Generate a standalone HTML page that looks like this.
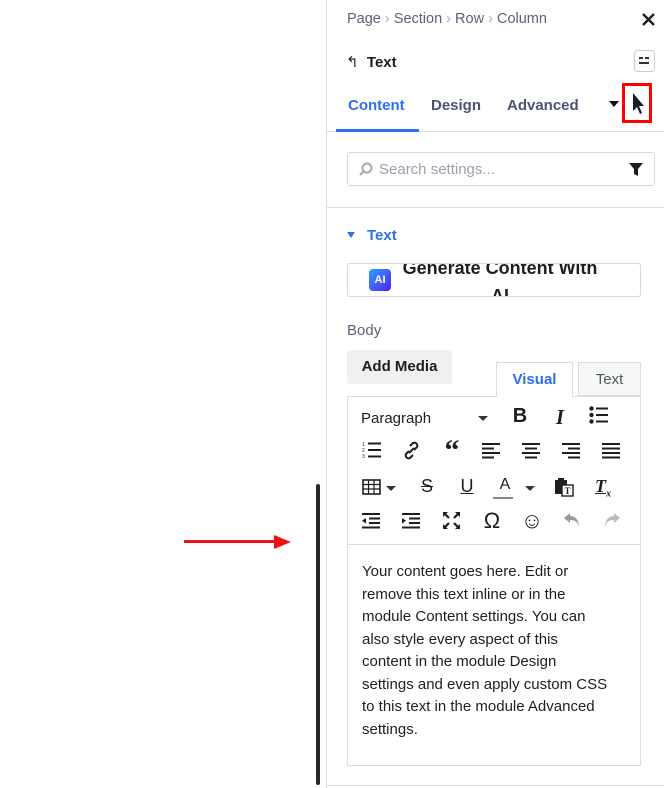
<!DOCTYPE html>
<html><head><meta charset="utf-8"><style>
body{margin:0;width:664px;height:788px;background:#fff;position:relative;overflow:hidden;font-family:"Liberation Sans",sans-serif;}
.a{position:absolute}
.ic{position:absolute;font-size:18px;color:#1e1e1e;text-align:center;width:30px;font-weight:bold}
svg.s{position:absolute}
</style></head><body>
<div class="a" style="left:326px;top:0;width:1px;height:788px;background:#dcdde6"></div>
<div class="a" style="left:326px;top:785px;width:338px;height:1px;background:#dcdde6"></div>
<div class="a" style="left:316px;top:484px;width:4px;height:301px;background:#23282d;border-radius:2px"></div>
<div class="a" style="left:184px;top:540px;width:92px;height:3px;background:#e11"></div>
<div class="a" style="left:274px;top:535px;width:0;height:0;border-left:17px solid #e11;border-top:7px solid transparent;border-bottom:7px solid transparent"></div>

<div class="a" style="left:347px;top:11px;font-size:14.5px;color:#5b6178">Page <span style="color:#aaa">&rsaquo;</span> Section <span style="color:#aaa">&rsaquo;</span> Row <span style="color:#aaa">&rsaquo;</span> Column</div>
<svg class="s" style="left:642px;top:13px" width="13" height="13"><path d="M1 1L12 12M12 1L1 12" stroke="#1e1e1e" stroke-width="2.4"/></svg>
<div class="a" style="left:346px;top:53px;font-size:15px;color:#1e1e1e">↰ &nbsp;<b style="font-weight:600">Text</b></div>
<div class="a" style="left:634px;top:50px;width:21px;height:22px;border:1px solid #ccc;border-radius:4px;box-sizing:border-box"></div>
<div class="a" style="left:639px;top:57px;width:4px;height:2px;background:#333"></div><div class="a" style="left:645px;top:57px;width:4px;height:2px;background:#333"></div>
<div class="a" style="left:639px;top:62px;width:10px;height:2px;background:#333"></div>
<div class="a" style="left:348px;top:97px;font-size:15px;color:#2e6ff2;font-weight:600">Content</div>
<div class="a" style="left:431px;top:97px;font-size:15px;color:#4d5470;font-weight:600">Design</div>
<div class="a" style="left:507px;top:97px;font-size:15px;color:#4d5470;font-weight:600">Advanced</div>
<div class="a" style="left:609px;top:101px;border-top:6px solid #111;border-left:5px solid transparent;border-right:5px solid transparent"></div>
<div class="a" style="left:622px;top:83px;width:30px;height:40px;border:3px solid #f00;box-sizing:border-box"></div>
<svg class="s" style="left:631px;top:92px" width="14" height="24"><path d="M2 1 L2 19 L6 15 L9 22 L11 21 L8 14 L13 14 Z" fill="#1e1e1e"/></svg>
<div class="a" style="left:327px;top:131px;width:337px;height:1px;background:#dcdde6"></div>
<div class="a" style="left:336px;top:129px;width:83px;height:3px;background:#2e6ff2"></div>

<div class="a" style="left:347px;top:152px;width:308px;height:34px;border:1px solid #d5d7de;border-radius:3px;box-sizing:border-box"></div>
<svg class="s" style="left:359px;top:162px" width="14" height="14"><circle cx="8" cy="6" r="4.5" stroke="#aaa" stroke-width="2" fill="none"/><path d="M5 9L1 13" stroke="#aaa" stroke-width="2.2"/></svg>
<div class="a" style="left:379px;top:161px;font-size:15px;color:#9aa0ab">Search settings...</div>
<svg class="s" style="left:629px;top:163px" width="14" height="13"><path d="M0 0H14L9 6V13L5 11V6Z" fill="#1e1e1e"/></svg>
<div class="a" style="left:327px;top:207px;width:337px;height:1px;background:#dcdde6"></div>

<div class="a" style="left:347px;top:232px;border-top:6px solid #2e6ff2;border-left:4px solid transparent;border-right:4px solid transparent"></div>
<div class="a" style="left:367px;top:227px;font-size:15px;color:#2e6ff2;font-weight:600">Text</div>
<div class="a" style="left:347px;top:263px;width:294px;height:34px;border:1px solid #d5d7de;border-radius:3px;box-sizing:border-box;overflow:hidden">
<div class="a" style="left:21px;top:5px;width:22px;height:22px;border-radius:4px;background:linear-gradient(135deg,#2aa0ff,#5522ee);color:#fff;font-size:11px;font-weight:bold;text-align:center;line-height:22px">AI</div>
<div class="a" style="left:52px;top:-10px;font-size:18px;font-weight:bold;color:#1e1e1e;width:200px;text-align:center;line-height:28px">Generate Content With AI</div></div>

<div class="a" style="left:347px;top:322px;font-size:15px;color:#5b6178">Body</div>
<div class="a" style="left:347px;top:350px;width:105px;height:34px;background:#f0f0f1;border-radius:3px;font-size:15px;font-weight:600;color:#1e1e1e;line-height:34px;text-align:center">Add Media</div>
<div class="a" style="left:496px;top:362px;width:77px;height:35px;border:1px solid #dcdcde;border-bottom:none;box-sizing:border-box;background:#fff;color:#2e6ff2;font-size:15px;text-align:center;line-height:33px;font-weight:600;z-index:2">Visual</div>
<div class="a" style="left:578px;top:362px;width:63px;height:34px;border:1px solid #dcdcde;box-sizing:border-box;background:#f6f7f7;color:#50575e;font-size:15px;text-align:center;line-height:33px">Text</div>
<div class="a" style="left:347px;top:396px;width:294px;height:370px;border:1px solid #dcdcde;box-sizing:border-box"></div>
<div class="a" style="left:348px;top:544px;width:292px;height:1px;background:#dcdcde"></div>

<div class="a" style="left:361px;top:410px;font-size:15px;color:#1e1e1e">Paragraph</div>
<div class="a" style="left:478px;top:416px;border-top:5px solid #333;border-left:5px solid transparent;border-right:5px solid transparent"></div>
<div class="ic" style="left:505px;top:405px;font-size:20px">B</div>
<div class="ic" style="left:545px;top:405px;font-size:21px;font-style:italic;font-family:'Liberation Serif'">I</div>
<svg class="s" style="left:589px;top:406px" width="20" height="18" fill="#1e1e1e"><circle cx="2.5" cy="2.5" r="2.2"/><circle cx="2.5" cy="9" r="2.2"/><circle cx="2.5" cy="15.5" r="2.2"/><rect x="7" y="1.5" width="12" height="2"/><rect x="7" y="8" width="12" height="2"/><rect x="7" y="14.5" width="12" height="2"/></svg>
<svg class="s" style="left:362px;top:441px" width="20" height="18" fill="#1e1e1e"><text x="0" y="5" font-size="5">1</text><text x="0" y="11" font-size="5">2</text><text x="0" y="17" font-size="5">3</text><rect x="6" y="1.5" width="13" height="2"/><rect x="6" y="8" width="13" height="2"/><rect x="6" y="14.5" width="13" height="2"/></svg>
<svg class="s" style="left:402px;top:441px" width="19" height="19"><path d="M8 5l3-3a3 3 0 014 4l-3 3M11 14l-3 3a3 3 0 01-4-4l3-3M7 12l5-5" stroke="#1e1e1e" stroke-width="2" fill="none"/></svg>
<div class="ic" style="left:437px;top:436px;font-size:30px;font-family:'Liberation Serif';line-height:30px">“</div>
<svg class="s" style="left:482px;top:443px" width="20" height="16" fill="#1e1e1e"><rect y="0" width="18" height="2"/><rect y="4.5" width="12" height="2"/><rect y="9" width="18" height="2"/><rect y="13.5" width="12" height="2"/></svg>
<svg class="s" style="left:522px;top:443px" width="20" height="16" fill="#1e1e1e"><rect y="0" width="18" height="2"/><rect x="3" y="4.5" width="12" height="2"/><rect y="9" width="18" height="2"/><rect x="3" y="13.5" width="12" height="2"/></svg>
<svg class="s" style="left:562px;top:443px" width="20" height="16" fill="#1e1e1e"><rect y="0" width="18" height="2"/><rect x="6" y="4.5" width="12" height="2"/><rect y="9" width="18" height="2"/><rect x="6" y="13.5" width="12" height="2"/></svg>
<svg class="s" style="left:602px;top:443px" width="20" height="16" fill="#1e1e1e"><rect y="0" width="18" height="2"/><rect y="4.5" width="18" height="2"/><rect y="9" width="18" height="2"/><rect y="13.5" width="18" height="2"/></svg>
<svg class="s" style="left:362px;top:479px" width="20" height="16"><rect x="1" y="1" width="17" height="14" fill="none" stroke="#1e1e1e" stroke-width="1.6"/><path d="M1 5.5H18M1 10H18M6.5 1V15M12 1V15" stroke="#1e1e1e" stroke-width="1.2"/></svg>
<div class="a" style="left:386px;top:486px;border-top:5px solid #333;border-left:5px solid transparent;border-right:5px solid transparent"></div>
<div class="ic" style="left:412px;top:476px;font-weight:normal;text-decoration:line-through">S</div>
<div class="ic" style="left:452px;top:476px;font-weight:normal;text-decoration:underline">U</div>
<div class="ic" style="left:490px;top:476px;font-weight:normal;font-size:16px">A</div>
<div class="a" style="left:493px;top:497px;width:20px;height:2px;background:#888"></div>
<div class="a" style="left:525px;top:486px;border-top:5px solid #333;border-left:5px solid transparent;border-right:5px solid transparent"></div>
<svg class="s" style="left:554px;top:477px" width="20" height="20"><rect x="1" y="3" width="12" height="14" fill="#1e1e1e"/><rect x="4" y="1" width="6" height="4" fill="#1e1e1e"/><rect x="8" y="8" width="11" height="11" fill="#fff" stroke="#1e1e1e" stroke-width="1.4"/><text x="10.5" y="17" font-size="9" font-weight="bold" fill="#1e1e1e" font-family="Liberation Serif">T</text></svg>
<div class="ic" style="left:588px;top:476px;font-style:italic;font-family:'Liberation Serif';text-decoration:underline">T<sub style="font-size:10px">x</sub></div>
<svg class="s" style="left:362px;top:513px" width="20" height="16" fill="#1e1e1e"><rect y="0" width="18" height="2"/><rect x="7" y="4.5" width="11" height="2"/><rect x="7" y="9" width="11" height="2"/><rect y="13.5" width="18" height="2"/><path d="M0 7.7L4 5V10.5Z"/></svg>
<svg class="s" style="left:402px;top:513px" width="20" height="16" fill="#1e1e1e"><rect y="0" width="18" height="2"/><rect x="7" y="4.5" width="11" height="2"/><rect x="7" y="9" width="11" height="2"/><rect y="13.5" width="18" height="2"/><path d="M4 7.7L0 5V10.5Z"/></svg>
<svg class="s" style="left:442px;top:511px" width="19" height="19"><path d="M2 2L7 7M17 2L12 7M2 17L7 12M17 17L12 12" stroke="#1e1e1e" stroke-width="2.2"/><path d="M1 1H6L1 6ZM18 1H13L18 6ZM1 18H6L1 13ZM18 18H13L18 13Z" fill="#1e1e1e"/></svg>
<div class="ic" style="left:477px;top:508px;font-weight:normal;font-size:22px">Ω</div>
<div class="ic" style="left:517px;top:508px;font-weight:normal;font-size:22px">☺</div>
<svg class="s" style="left:563px;top:512px" width="18" height="16"><path d="M7 1L1 6L7 11V8C12 8 15 10 16 15C16 9 13 4 7 4Z" fill="#999"/></svg>
<svg class="s" style="left:603px;top:512px" width="18" height="16"><path d="M11 1L17 6L11 11V8C6 8 3 10 2 15C2 9 5 4 11 4Z" fill="#bbb"/></svg>

<div class="a" style="left:362px;top:561px;width:275px;font-size:15px;line-height:22.5px;color:#1e1e1e;white-space:nowrap">Your content goes here. Edit or<br>remove this text inline or in the<br>module Content settings. You can<br>also style every aspect of this<br>content in the module Design<br>settings and even apply custom CSS<br>to this text in the module Advanced<br>settings.</div>
</body></html>
